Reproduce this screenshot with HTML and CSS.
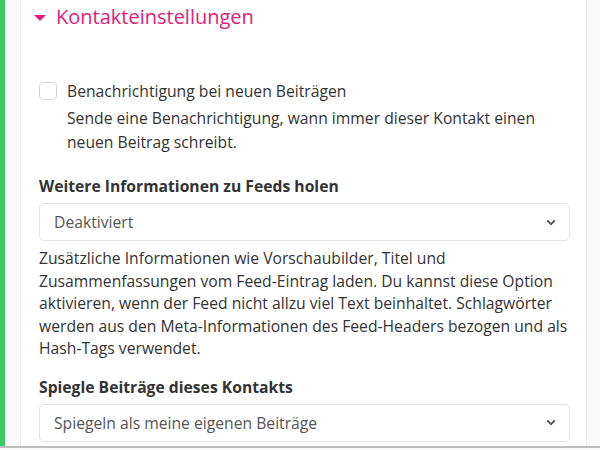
FILE: index.html
```html
<!DOCTYPE html>
<html lang="de">
<head>
<meta charset="utf-8">
<link rel="stylesheet" href="styles.css">
</head>
<body>
<div class="page">
  <div class="accent"></div>
  <div class="wrap">
    <section class="panel">
      <h2 class="panel-title"><span class="caret"></span>Kontakteinstellungen</h2>
      <div class="panel-body">
        <div class="check-row">
          <span class="checkbox"></span>
          <div class="check-text">
            <div class="check-label">Benachrichtigung bei neuen Beiträgen</div>
            <div class="check-help">Sende eine Benachrichtigung, wann immer dieser Kontakt einen neuen Beitrag schreibt.</div>
          </div>
        </div>
        <div class="field">
          <label class="field-label">Weitere Informationen zu Feeds holen</label>
          <div class="select"><span>Deaktiviert</span><svg class="chev" width="10" height="7" viewBox="0 0 10 7"><path d="M1.2 1.5 L5 5.2 L8.8 1.5" fill="none" stroke="#555" stroke-width="1.8"/></svg></div>
          <p class="field-help">Zusätzliche Informationen wie Vorschaubilder, Titel und Zusammenfassungen vom Feed-Eintrag laden. Du kannst diese Option aktivieren, wenn der Feed nicht allzu viel Text beinhaltet. Schlagwörter werden aus den Meta-Informationen des Feed-Headers bezogen und als Hash-Tags verwendet.</p>
        </div>
        <div class="field">
          <label class="field-label">Spiegle Beiträge dieses Kontakts</label>
          <div class="select"><span>Spiegeln als meine eigenen Beiträge</span><svg class="chev" width="10" height="7" viewBox="0 0 10 7"><path d="M1.2 1.5 L5 5.2 L8.8 1.5" fill="none" stroke="#555" stroke-width="1.8"/></svg></div>
        </div>
      </div>
    </section>
  </div>
</div>
</body>
</html>
```
FILE: styles.css
```css
* { box-sizing: border-box; }
html, body { margin: 0; padding: 0; }
body {
  width: 600px;
  height: 450px;
  overflow: hidden;
  background: #f9f9f9;
  font-family: "Open Sans", "Noto Sans", sans-serif;
  color: #333;
  font-size: 15.7px;
}
.page {
  display: flex;
  height: 448px;
  border-bottom: 2px solid #bdbdbd;
  overflow: hidden;
}
.accent {
  width: 5px;
  flex: none;
  background: #3cc75f;
}
.wrap {
  flex: 1;
  padding-left: 15px;
  padding-right: 13px;
}
.panel {
  background: #fff;
  border-left: 1px solid #ededed;
  border-right: 1px solid #ededed;
  height: calc(100% + 20px);
  margin-top: -20px;
  padding: 20px 16px 0 13px;
}
.panel-title {
  margin: 0;
  font-weight: 400;
  font-size: 20px;
  line-height: 34px;
  color: #e0207a;
  display: flex;
  align-items: center;
}
.caret {
  width: 0;
  height: 0;
  border-left: 6px solid transparent;
  border-right: 6px solid transparent;
  border-top: 6px solid #e0207a;
  margin-right: 10px;
  margin-top: 1px;
}
.panel-body {
  padding-left: 5px;
  padding-top: 46px;
}
.check-row {
  display: flex;
  gap: 10px;
}
.checkbox {
  width: 18px;
  height: 18px;
  border: 1px solid #d6d6d6;
  border-radius: 4px;
  margin-top: 2px;
  flex: none;
}
.check-label {
  line-height: 22px;
}
.check-help {
  line-height: 24px;
  margin-top: 4px;
}
.field {
  margin-top: 21px;
}
.field + .field {
  margin-top: 16px;
}
.field-label {
  display: block;
  font-weight: 700;
  line-height: 22px;
  margin-bottom: 6px;
}
.select {
  height: 38px;
  border: 1px solid #e4e4e4;
  border-radius: 5px;
  display: flex;
  align-items: center;
  justify-content: space-between;
  padding: 0 13px 0 14px;
  color: #555;
}
.field-help {
  margin: 6px 0 0;
  line-height: 22.5px;
}
```
